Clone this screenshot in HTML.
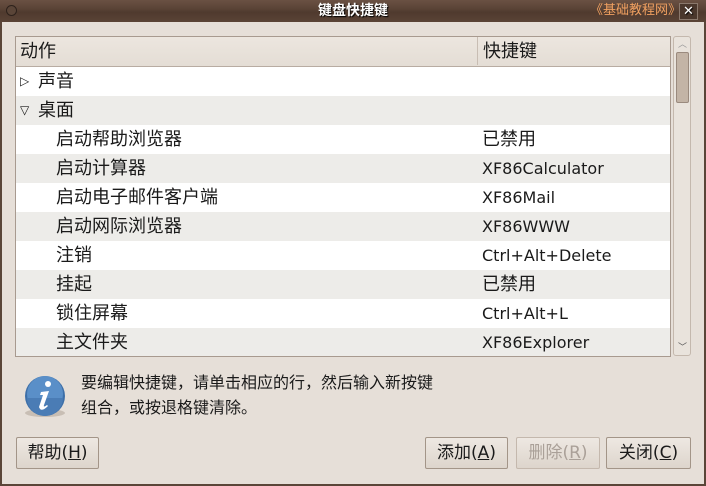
<!DOCTYPE html>
<html><head><meta charset="utf-8"><style>
*{margin:0;padding:0;box-sizing:border-box}
body{width:706px;height:486px;overflow:hidden;background:#5a4538;font-family:"DejaVu Sans","Noto Sans CJK SC",sans-serif;font-size:16px;color:#1a1a1a;position:relative}
#win{position:absolute;left:2px;top:22px;width:702px;height:462px;background:#e6dfd8}
#title{position:absolute;left:0;top:0;width:706px;height:22px;background:linear-gradient(#6a5143,#5a4336 40%,#4f3a2e 55%,#5a4336);color:#fff;font-weight:bold;font-size:14px;text-align:center;line-height:22px;text-shadow:1px 1px 1px #000}
#wm{position:absolute;left:590px;top:3px;color:#f0a060;font-size:13px;line-height:16px;font-weight:normal;text-shadow:none}
#cls{position:absolute;left:679px;top:3px;width:19px;height:17px;border:1px solid #8a786c;background:#4a372c;color:#fff;font-size:13px;line-height:15px;text-align:center}
#circ{position:absolute;left:6px;top:5px;width:11px;height:11px;border-radius:50%;border:1px solid #2d211b;background:#5a4538}
#tree{position:absolute;left:15px;top:36px;width:656px;height:321px;border:1px solid #a89a8f;background:#fff;overflow:hidden}
.hd{height:30px;background:linear-gradient(#ece6df,#e4ddd5);border-bottom:1px solid #b8aca2;position:relative;line-height:30px}
.row{height:29px;line-height:29px;position:relative}
.cj{font-size:18px}
.c1{position:absolute;left:4px}
.c2{position:absolute;left:466px}
.div{position:absolute;left:461px;top:31px;bottom:0;border-left:1px dotted #aaa}
#sb{position:absolute;left:673px;top:36px;width:18px;height:320px;border:1px solid #c4b8ad;border-radius:3px;background:#e9e3dc}
#th{position:absolute;left:2px;top:15px;width:13px;height:51px;border:1px solid #9a8a7e;border-radius:2px;background:#c3b4a6}
.btn{position:absolute;top:437px;height:32px;border:1px solid #a39588;border-radius:2px;background:linear-gradient(#eee8e2,#ddd5cc);text-align:center;line-height:30px;font-size:17px}
.btn u{text-decoration:underline}
#msg{position:absolute;left:81px;top:370px;line-height:25px;font-size:16px}
</style></head><body>
<div id="title"><div id="circ"></div>键盘快捷键<span id="wm">《基础教程网》</span><div id="cls">✕</div></div>
<div id="win"></div>
<div id="tree">
<div class="hd"><span class="c1 cj">动作</span><span class="c2 cj" style="border-left:1px solid #c8bdb3;left:461px;padding-left:5px;top:0;height:28px">快捷键</span></div>
<div class="div"></div>
<div>
<div class="row" style="background:#fff"><span class="c1" style="font-size:12px">▷</span><span class="cj" style="position:absolute;left:22px">声音</span></div>
<div class="row" style="background:#edece9"><span class="c1" style="font-size:12px">▽</span><span class="cj" style="position:absolute;left:22px">桌面</span></div>
<div class="row" style="background:#fff"><span class="cj" style="position:absolute;left:40px">启动帮助浏览器</span><span class="c2 cj">已禁用</span></div>
<div class="row" style="background:#edece9"><span class="cj" style="position:absolute;left:40px">启动计算器</span><span class="c2">XF86Calculator</span></div>
<div class="row" style="background:#fff"><span class="cj" style="position:absolute;left:40px">启动电子邮件客户端</span><span class="c2">XF86Mail</span></div>
<div class="row" style="background:#edece9"><span class="cj" style="position:absolute;left:40px">启动网际浏览器</span><span class="c2">XF86WWW</span></div>
<div class="row" style="background:#fff"><span class="cj" style="position:absolute;left:40px">注销</span><span class="c2">Ctrl+Alt+Delete</span></div>
<div class="row" style="background:#edece9"><span class="cj" style="position:absolute;left:40px">挂起</span><span class="c2 cj">已禁用</span></div>
<div class="row" style="background:#fff"><span class="cj" style="position:absolute;left:40px">锁住屏幕</span><span class="c2">Ctrl+Alt+L</span></div>
<div class="row" style="background:#edece9"><span class="cj" style="position:absolute;left:40px">主文件夹</span><span class="c2">XF86Explorer</span></div>
</div></div>
<div id="sb"><div style="position:absolute;left:4px;top:0;font-size:9px;color:#999">︿</div><div id="th"></div><div style="position:absolute;left:4px;bottom:2px;font-size:9px;color:#555">﹀</div></div>
<svg style="position:absolute;left:22px;top:373px" width="48" height="48"><ellipse cx="23" cy="40" rx="20" ry="4" fill="#c8beb4"/><circle cx="23" cy="23" r="20" fill="#3d6fa8"/><circle cx="23" cy="21" r="18" fill="#5a8fc8"/><path d="M5 25 A18 18 0 0 0 41 25 Z" fill="#4a7cb5"/><circle cx="26" cy="11" r="3" fill="#fff"/><path d="M19 19 L27 18 L22 32 Q21 35 25 32 L26 33 Q19 40 17 34 L21 22 L18 22 Z" fill="#fff"/></svg>
<div id="msg">要编辑快捷键，请单击相应的行，然后输入新按键<br>组合，或按退格键清除。</div>
<div class="btn" style="left:16px;width:83px">帮助(<u>H</u>)</div>
<div class="btn" style="left:425px;width:83px">添加(<u>A</u>)</div>
<div class="btn" style="left:516px;width:84px;color:#aaa098;border-color:#c4b8ad">删除(<u>R</u>)</div>
<div class="btn" style="left:606px;width:85px">关闭(<u>C</u>)</div>
</body></html>
